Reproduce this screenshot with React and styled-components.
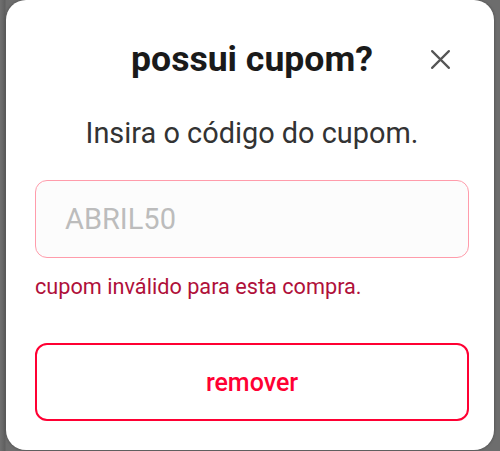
import React from 'react';
import styled, { createGlobalStyle } from 'styled-components';

const GlobalStyle = createGlobalStyle`
  html, body {
    margin: 0;
    padding: 0;
    background: #6d6d6d;
  }
  body {
    font-family: Roboto, "Liberation Sans", sans-serif;
  }
`;

const Backdrop = styled.div`
  width: 500px;
  height: 451px;
  overflow: hidden;
  box-sizing: border-box;
  padding: 0 6px;
  background: linear-gradient(90deg, #707070 0, #5f5f5f 5px, #6d6d6d 6px);
`;

const Modal = styled.div`
  background: #fff;
  border-radius: 20px;
  height: 450px;
  box-sizing: border-box;
  padding: 41px 25px 0 29px;
  display: flex;
  flex-direction: column;
  box-shadow: 0 0 3px rgba(0, 0, 0, 0.35);
`;

const Header = styled.div`
  position: relative;
  display: flex;
  justify-content: center;
  align-items: center;
  height: 36px;
`;

const Title = styled.h2`
  margin: 0;
  font-size: 35.6px;
  font-weight: 700;
  color: #1a1a1a;
  line-height: 36px;
  white-space: nowrap;
`;

const Close = styled.button`
  position: absolute;
  right: 18px;
  top: 7px;
  width: 22px;
  height: 22px;
  padding: 0;
  border: none;
  background: none;
  display: flex;
  align-items: center;
  justify-content: center;
  cursor: pointer;
`;

const Subtitle = styled.p`
  margin: 37px 0 0;
  text-align: center;
  font-size: 28.9px;
  line-height: 38px;
  color: #333;
  white-space: nowrap;
`;

const Field = styled.input`
  margin-top: 28px;
  height: 78px;
  box-sizing: border-box;
  border: 1.5px solid #ff9cab;
  border-radius: 12px;
  background: #fcfcfc;
  padding: 0 29px;
  font-family: Roboto, "Liberation Sans", sans-serif;
  font-size: 29px;
  color: #333;
  outline: none;

  &::placeholder {
    color: #bcbcbc;
  }
`;

const ErrorText = styled.p`
  margin: 15px 0 0;
  font-size: 21.7px;
  line-height: 28px;
  color: #b0103a;
`;

const Button = styled.button`
  margin-top: 42px;
  height: 78px;
  box-sizing: border-box;
  border: 2px solid #ff0033;
  border-radius: 12px;
  background: #fff;
  color: #ff0033;
  font-family: Roboto, "Liberation Sans", sans-serif;
  font-size: 25px;
  font-weight: 500;
  cursor: pointer;
`;

export default function App() {
  return (
    <>
      <GlobalStyle />
      <Backdrop>
        <Modal>
          <Header>
            <Title>possui cupom?</Title>
            <Close aria-label="fechar">
              <svg width="21" height="21" viewBox="0 0 20 20">
                <path d="M2 2 L18 18 M18 2 L2 18" stroke="#555" strokeWidth="2.1" strokeLinecap="round" />
              </svg>
            </Close>
          </Header>
          <Subtitle>Insira o código do cupom.</Subtitle>
          <Field placeholder="ABRIL50" />
          <ErrorText>cupom inválido para esta compra.</ErrorText>
          <Button>remover</Button>
        </Modal>
      </Backdrop>
    </>
  );
}
